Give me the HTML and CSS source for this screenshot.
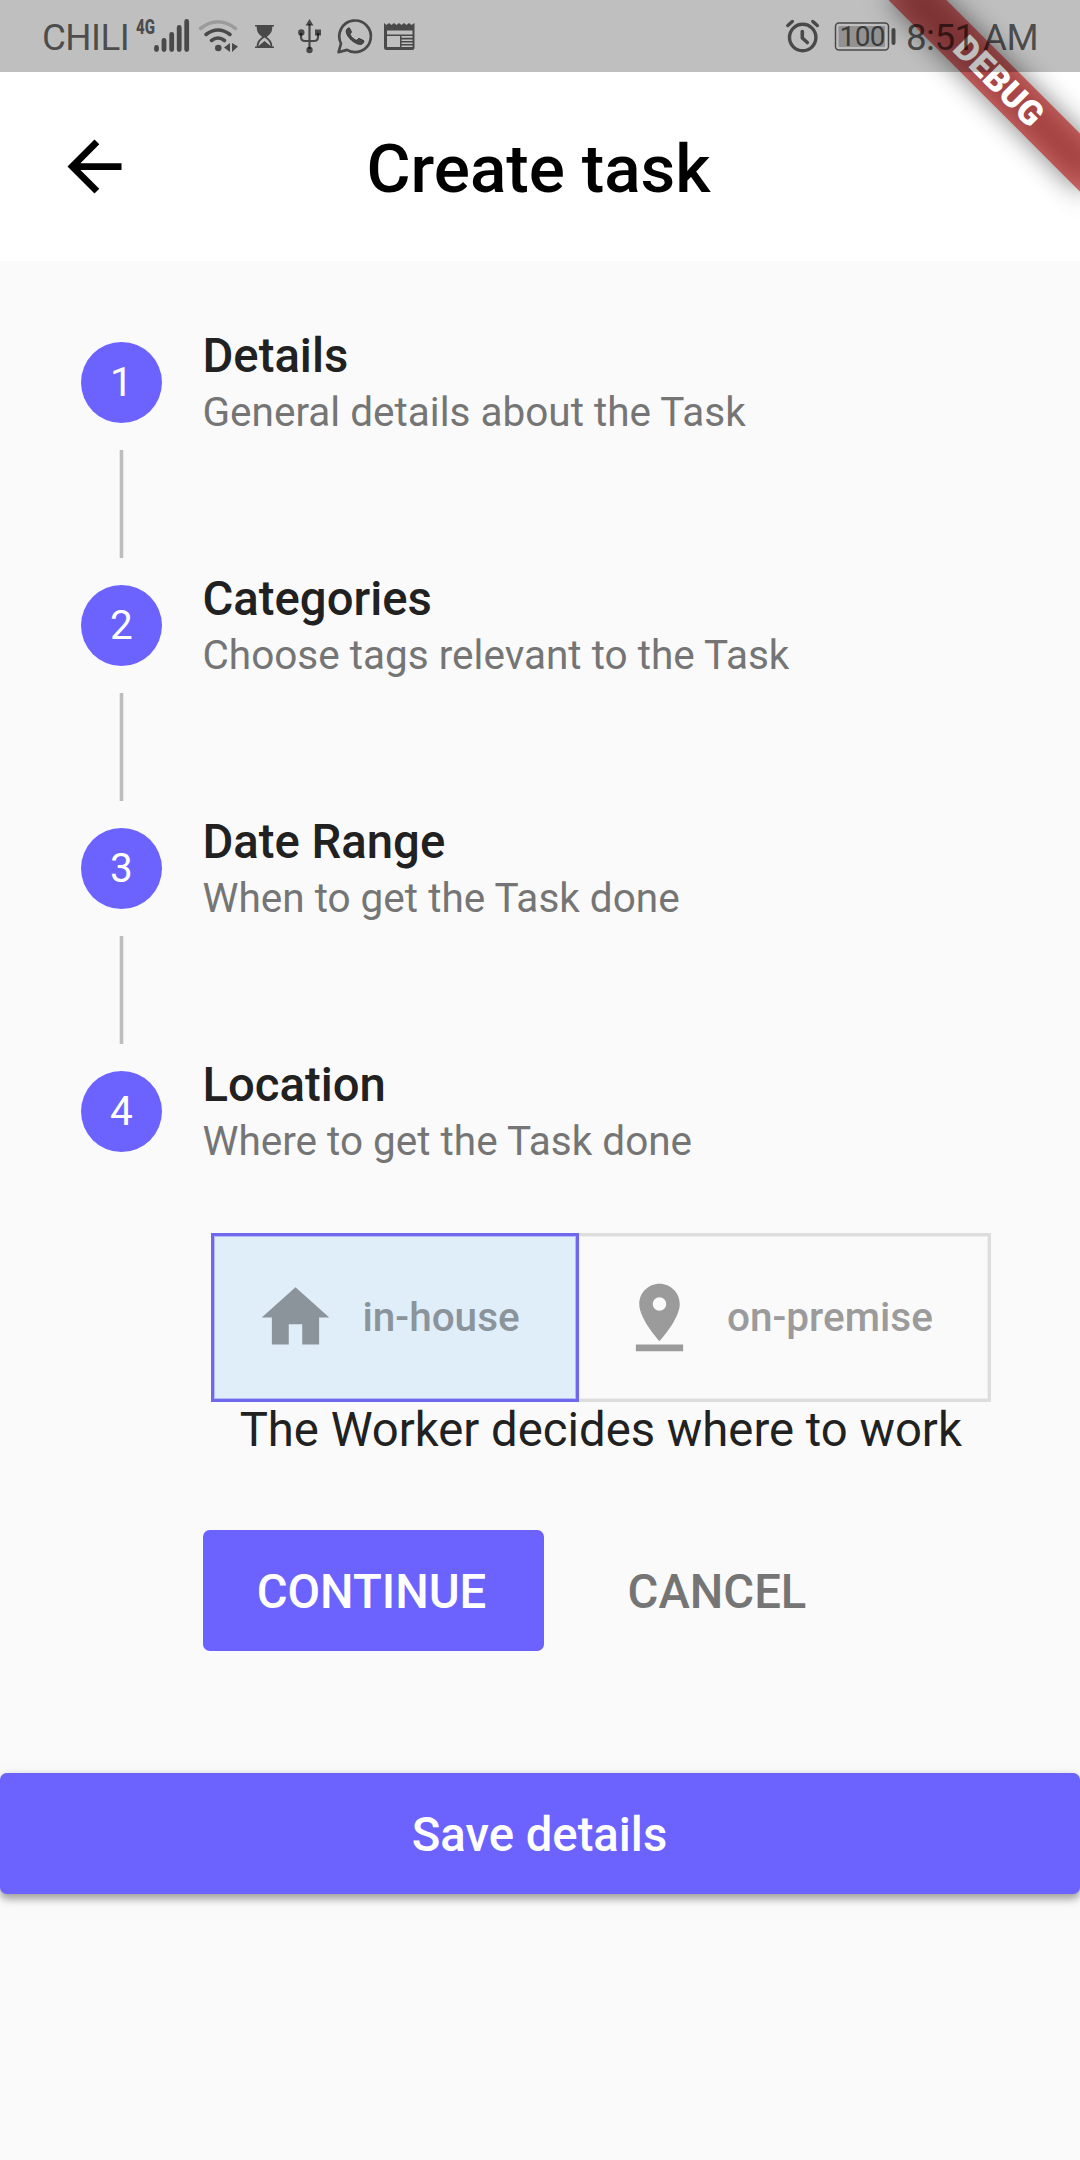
FILE: index.html
```html
<!DOCTYPE html>
<html lang="en">
<head>
<meta charset="utf-8">
<title>Create task</title>
<link rel="stylesheet" href="styles.css">
</head>
<body>
<div class="screen">
  <div class="ribbon"><span class="ribbon-band">DEBUG</span></div>
  <div class="status">
    <div class="status-left">
      <span class="carrier">CHILI</span>
      <svg class="ic-signal" width="54" height="36" viewBox="135 17 54 36">
        <text x="136" y="33.5" class="net" textLength="19" lengthAdjust="spacingAndGlyphs">4G</text>
        <path d="M156.500 47.500v2M164 40.500v9M171.700 34.500v15M179.200 27.500v22M186.700 21.500v28" fill="none" stroke="currentColor" stroke-width="4.800" stroke-linecap="round"/>
      </svg>
      <svg class="ic-wifi" width="41" height="36" viewBox="198 17 41 36" fill="none" stroke="currentColor" stroke-width="3.600" stroke-linecap="round">
        <path d="M200.500 28.500Q218 15 235.500 28.500" opacity=".3"/>
        <path d="M206 34.500Q218 25.500 230 34.500M211.500 40.500Q218 35.500 224.500 40.500"/>
        <circle cx="218.300" cy="48" r="3.300" fill="currentColor" stroke="none"/>
        <path d="M224 47.500l6-4.500v9zM238 46.500l-6-3.500v9z" fill="currentColor" stroke="none"/>
      </svg>
      <svg class="ic-glass" width="20" height="24" viewBox="254 25 20 24" fill="currentColor">
        <path d="M255 25h19v1.600h-1.700c0 5-1.400 7.400-5.600 10.400 4.200 3 5.600 5.400 5.600 9.500h1.700V48h-19v-1.500h1.700c0-4.100 1.400-6.500 5.600-9.500-4.200-3-5.600-5.400-5.600-10.400H255zM264.500 37.500c-4 2.800-6 5-6 8.600l6-5 6 5c0-3.600-2-5.800-6-8.600z" fill-rule="evenodd"/>
      </svg>
      <svg class="ic-usb" width="24" height="36" viewBox="298 18 24 36" fill="none" stroke="currentColor" stroke-width="2.200">
        <path d="M309.500 24v25M301 33v4q0 4 4 4h9q4 0 4-4v-4"/>
        <path d="M309.500 19l4 6.500h-8zM315 29.500h6v6h-6z" fill="currentColor" stroke="none"/>
        <circle cx="301.300" cy="32.500" r="3.200" fill="currentColor" stroke="none"/>
        <circle cx="309.500" cy="50" r="3.200" fill="currentColor" stroke="none"/>
      </svg>
      <svg class="ic-wa" width="36" height="36" viewBox="337 18 36 36">
        <path d="M338.600 52.200l2.400-8.700A15.800 15.800 0 1 1 347 49.900z" fill="none" stroke="currentColor" stroke-width="2.700" stroke-linejoin="round"/>
        <path d="M349.500 28c-1-.7-3 .7-3.400 3 -.3 3 3 7.500 6.500 10.200 3.500 2.600 7.500 4.300 9.800 2.700 1.600-1.200 1.700-2.800 1.300-3.300l-4.600-2.300c-1-.2-1.700 2.200-2.900 1.900-2.200-.8-5-3.300-6-5.700-.3-1 1.600-1.700 1.400-2.800z" fill="currentColor" stroke="currentColor" stroke-width=".8"/>
      </svg>
      <svg class="ic-news" width="32" height="28" viewBox="384 23 32 28">
        <path d="M384 23l2.500 2 2.500-2 2.500 2 2.500-2 2.500 2 2.500-2 2.500 2 2.500-2 2.500 2 2.500-2 2.500 2 3-2v24.500q0 2.500-2.500 2.500h-25.500q-2.500 0-2.500-2.500zM387 30.500v4h25.500v-4zM387 36v11h13V36zM401.500 36v1.800h11V36zM401.500 39.500v1.400h11v-1.400zM401.500 42.500v1.400h11v-1.400zM401.500 45.500V47h11v-1.500z" fill="currentColor" fill-rule="evenodd"/>
      </svg>
    </div>
    <div class="status-right">
      <svg class="ic-alarm" width="34" height="34" viewBox="786 19 34 34" fill="none" stroke="currentColor" stroke-linecap="round">
        <circle cx="802.700" cy="37.500" r="13.200" stroke-width="3.400"/>
        <path d="M802.300 31.500v6.500l5 4.500" stroke-width="3.600" stroke-linejoin="round"/>
        <path d="M787.800 25.500l4.500-4M817.300 25.500l-4.500-4" stroke-width="3.400"/>
      </svg>
      <svg class="ic-batt" width="62" height="30" viewBox="834 22 62 30">
        <rect x="835.500" y="22.900" width="53" height="27" rx="3.500" fill="none" stroke="currentColor" stroke-width="1.500"/>
        <rect x="838.500" y="26" width="46.500" height="21" rx="1" fill="currentColor" opacity=".38"/>
        <path d="M893.500 30v13" stroke="currentColor" stroke-width="4" stroke-linecap="round"/>
        <text x="839.500" y="45.800" class="level" textLength="46">100</text>
      </svg>
      <span class="clock">8:51 AM</span>
    </div>
  </div>
  <header class="appbar">
    <svg class="back" viewBox="0 0 24 24"><path d="M20 11H7.830l5.590-5.590L12 4l-8 8 8 8 1.410-1.410L7.830 13H20v-2z"/></svg>
    <h1 class="title">Create task</h1>
  </header>
  <main class="content">
    <section class="step">
      <div class="rail"><span class="dot">1</span><span class="line"></span></div>
      <div class="text"><h2 class="name">Details</h2><p class="sub">General details about the Task</p></div>
    </section>
    <section class="step">
      <div class="rail"><span class="dot">2</span><span class="line"></span></div>
      <div class="text"><h2 class="name">Categories</h2><p class="sub">Choose tags relevant to the Task</p></div>
    </section>
    <section class="step">
      <div class="rail"><span class="dot">3</span><span class="line"></span></div>
      <div class="text"><h2 class="name">Date Range</h2><p class="sub">When to get the Task done</p></div>
    </section>
    <section class="step step-last">
      <div class="rail"><span class="dot">4</span></div>
      <div class="text"><h2 class="name">Location</h2><p class="sub">Where to get the Task done</p></div>
    </section>
    <div class="panel">
      <div class="toggle">
        <div class="option selected">
          <svg class="icon" viewBox="0 0 24 24"><path d="M10 20v-6h4v6h5v-8h3L12 3 2 12h3v8z"/></svg>
          <span>in-house</span>
        </div>
        <div class="option">
          <svg class="icon" viewBox="0 0 24 24"><path d="M18 8c0-3.310-2.690-6-6-6S6 4.690 6 8c0 4.500 6 11 6 11s6-6.500 6-11zm-8 0c0-1.100.9-2 2-2s2 .9 2 2-.89 2-2 2c-1.100 0-2-.9-2-2zM5 20v2h14v-2H5z"/></svg>
          <span>on-premise</span>
        </div>
      </div>
      <p class="note">The Worker decides where to work</p>
      <div class="actions">
        <button class="btn primary">CONTINUE</button>
        <button class="btn flat">CANCEL</button>
      </div>
    </div>
    <button class="save">Save details</button>
  </main>
</div>
</body>
</html>
```
FILE: styles.css
```css
* { box-sizing: border-box; }
body {
  margin: 0;
  background: #fafafa;
  font-family: Roboto, "Noto Sans", sans-serif;
  color: #212121;
}
h1, h2, p { margin: 0; font-weight: 400; }
button { border: 0; padding: 0; font-family: inherit; }
svg { display: block; flex: none; overflow: visible; }

.screen {
  position: relative;
  height: 2160px;
  overflow: hidden;
  background: linear-gradient(#fff 72px, #fafafa 72px);
}

/* corner banner, drawn below the translucent status bar */
.ribbon {
  position: absolute;
  right: -54px;
  top: 60.75px;
  width: 270px;
  height: 40.5px;
  transform: rotate(45deg);
  z-index: 1;
}
.ribbon::before {
  content: "";
  position: absolute;
  inset: 0;
  background: rgba(0, 0, 0, 0.5);
  filter: blur(13.400px);
}
.ribbon-band {
  position: relative;
  display: block;
  background: rgba(183, 28, 28, 0.63);
  color: #fff;
  font-size: 34.400px;
  font-weight: 900;
  line-height: 40.5px;
  letter-spacing: 0.3px;
  text-align: center;
}

.status {
  position: relative;
  z-index: 2;
  display: flex;
  justify-content: space-between;
  height: 72px;
  padding: 0 43px 0 42px;
  background: rgba(0, 0, 0, 0.25);
  color: rgba(0, 0, 0, 0.62);
}
.status-left, .status-right { display: flex; align-items: flex-start; }
.carrier, .clock { font-size: 36.800px; line-height: 44px; margin-top: 16px; letter-spacing: -0.6px; white-space: nowrap; }
.carrier { width: 93px; }
.clock { width: 131px; margin-left: 10px; }
.net { font-size: 21px; font-weight: 900; fill: currentColor; }
.level { font-size: 28px; fill: currentColor; }
.ic-signal { margin-top: 17px; }
.ic-wifi { margin: 17px 0 0 9px; }
.ic-glass { margin: 25px 0 0 15px; }
.ic-usb { margin: 18px 0 0 24px; }
.ic-wa { margin: 18px 0 0 15px; }
.ic-news { margin: 23px 0 0 11px; }
.ic-alarm { margin: 19px 14px 0 0; }
.ic-batt { margin-top: 22px; }

.appbar {
  display: grid;
  grid-template-columns: 81px 1fr 84px;
  align-items: center;
  height: 189px;
  padding: 0 54px;
  background: #fff;
  color: #000;
}
.back { width: 81px; height: 81px; }
.title { font-size: 67.500px; font-weight: 500; line-height: 80px; padding-top: 4px; text-align: center; }

.content { padding-top: 63px; }
.step { display: flex; gap: 40.500px; height: 243px; padding-left: 81px; }
.step-last { height: 167px; }
.rail { display: flex; flex-direction: column; align-items: center; width: 81px; padding-top: 18px; gap: 27px; }
.dot {
  width: 81px;
  height: 81px;
  border-radius: 50%;
  background: #6c63ff;
  color: #fff;
  font-size: 40.500px;
  line-height: 81px;
  text-align: center;
}
.line { width: 3px; height: 108px; background: #bdbdbd; box-shadow: 1px 0 #e8e8e8, -1px 0 #e8e8e8; }
.name { font-size: 47.250px; font-weight: 500; line-height: 55px; padding-top: 5px; }
.sub { font-size: 40.500px; line-height: 48px; padding-top: 4px; color: #757575; }

.panel { padding: 0 81px 0 202.500px; }
.toggle { display: flex; width: 780px; margin: 13px 0 0 8.500px; }
.option {
  display: flex;
  align-items: center;
  gap: 27px;
  height: 168.750px;
  border: 3.375px solid #ddd;
  box-shadow: inset 0 0 0 1px rgba(221, 221, 221, 0.4);
  color: #9b9b9b;
  font-size: 40.500px;
  font-weight: 500;
  flex: 1;
  border-left: 0;
  padding-left: 40.500px;
}
.option.selected {
  flex: 0 0 367.500px;
  border: 3.375px solid #6f68ec;
  box-shadow: inset 0 0 0 1px rgba(111, 104, 236, 0.4);
  background: #e0eef9;
  color: #8b949b;
}
.icon, .back { fill: currentColor; }
.icon { width: 81px; height: 81px; }
.note { font-size: 47.250px; line-height: 55px; padding-top: 1px; text-align: center; }
.actions { display: flex; gap: 27px; margin-top: 72px; }
.btn { height: 121.500px; border-radius: 6.750px; font-size: 47.250px; font-weight: 500; padding-top: 2px; }
.primary { width: 341px; padding-right: 3px; background: #6c63ff; color: #fff; }
.flat { width: 293px; background: none; color: #757575; }
.save {
  display: block;
  width: 100%;
  height: 121.500px;
  margin-top: 121.500px;
  padding: 2px 1px 0 0;
  border-radius: 6.750px;
  background: #6c63ff;
  color: #fff;
  font-size: 47.250px;
  font-weight: 500;
  box-shadow: 0 3px 7px rgba(0, 0, 0, 0.2), 0 6.750px 7px rgba(0, 0, 0, 0.14), 0 3px 14px rgba(0, 0, 0, 0.1);
}
```
